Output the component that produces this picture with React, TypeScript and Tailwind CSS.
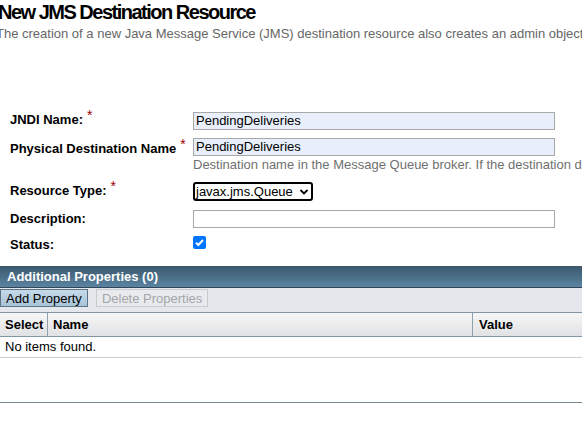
const Req = () => (
  <span className="text-[#a00000] text-[14px] font-normal align-top relative -top-[5px] ml-1">*</span>
);

const App = () => {
  return (
    <div className="w-[582px] h-[421px] overflow-hidden bg-white font-['Liberation_Sans',Arial,sans-serif] text-[13px] text-black">
      <div className="-ml-[2px] whitespace-nowrap">
        <h1 className="text-[20px] font-bold leading-[22px] pt-[1px] tracking-[-1.5px]">New JMS Destination Resource</h1>
        <p className="text-[#666666] text-[13px] leading-[16px] mt-[3px] -ml-[2px]">
          The creation of a new Java Message Service (JMS) destination resource also creates an admin object resource.
        </p>
      </div>

      <div className="mt-[69px] pl-[10px] flex flex-col">
        <div className="flex items-center h-[19px]">
          <label className="w-[183px] shrink-0 font-bold whitespace-nowrap">
            JNDI Name:
            <Req />
          </label>
          <input
            className="w-[362px] h-[18px] border border-[#a8a8a8] bg-[#e8effa] px-[2px] text-[13px] outline-none"
            defaultValue="PendingDeliveries"
          />
        </div>
        <div className="flex items-start mt-[8px]">
          <label className="w-[183px] shrink-0 font-bold whitespace-nowrap pt-[1px]">
            Physical Destination Name
            <Req />
          </label>
          <div className="flex flex-col whitespace-nowrap">
            <input
              className="w-[362px] h-[18px] border border-[#a8a8a8] bg-[#e8effa] px-[2px] text-[13px] outline-none"
              defaultValue="PendingDeliveries"
            />
            <span className="text-[#707070] leading-[16px] mt-[1px]">
              Destination name in the Message Queue broker. If the destination does not exist, it will be created.
            </span>
          </div>
        </div>
        <div className="flex items-center mt-[9px] h-[19px]">
          <label className="w-[183px] shrink-0 font-bold whitespace-nowrap">
            Resource Type:
            <Req />
          </label>
          <div className="w-[120px] h-[19px] border-2 border-black rounded-[3px] flex items-center justify-between pl-[1px] pr-[2px]">
            <span>javax.jms.Queue</span>
            <svg width="10" height="8" viewBox="0 0 10 8">
              <path d="M1.5 2 L5 5.5 L8.5 2" fill="none" stroke="#000" strokeWidth="1.8" />
            </svg>
          </div>
        </div>
        <div className="flex items-center mt-[9px] h-[18px]">
          <label className="w-[183px] shrink-0 font-bold">Description:</label>
          <input className="w-[362px] h-[18px] border border-[#a8a8a8] bg-white outline-none" />
        </div>
        <div className="flex items-center mt-[7px] h-[14px]">
          <label className="w-[183px] shrink-0 font-bold pt-[6px]">Status:</label>
          <span className="w-[13px] h-[13px] rounded-[2px] bg-[#0075ff] flex items-center justify-center">
            <svg width="11" height="11" viewBox="0 0 11 11">
              <path d="M2 5.8 L4.3 8 L9 3" fill="none" stroke="#fff" strokeWidth="2" />
            </svg>
          </span>
        </div>
      </div>

      <div className="mt-[17px]">
        <div className="h-[22px] bg-gradient-to-b from-[#3b586c] to-[#5b84a2] border-b border-[#2f4758] flex items-center pl-[7px] text-white font-bold">
          Additional Properties (0)
        </div>
        <div className="h-[25px] bg-[#e4e7eb] flex items-start pt-[1px] gap-[8px] border-b border-[#7f96a5]">
          <button className="h-[18px] px-[5px] bg-gradient-to-b from-[#c6d9e8] to-[#a9c4d8] border border-[#5a7486] text-[13px] leading-[15px]">
            Add Property
          </button>
          <button className="h-[18px] px-[5px] bg-[#e8eaed] border border-[#c8cbce] text-[#a3a6a9] text-[13px] leading-[15px]">
            Delete Properties
          </button>
        </div>
        <div className="grid grid-cols-[48px_425px_1fr] h-[24px] bg-gradient-to-b from-[#f6f6f6] to-[#e1e2e4] border-b border-[#7f96a5] font-bold">
          <div className="flex items-center pl-[5px] border-r border-[#8ea1ad]">Select</div>
          <div className="flex items-center pl-[5px] border-r border-[#8ea1ad]">Name</div>
          <div className="flex items-center pl-[6px]">Value</div>
        </div>
        <div className="h-[21px] flex items-center pl-[5px] border-b border-[#d0d0d0]">No items found.</div>
        <div className="h-[45px] border-b border-[#7a8b93]" />
      </div>
    </div>
  );
};

export default App;
